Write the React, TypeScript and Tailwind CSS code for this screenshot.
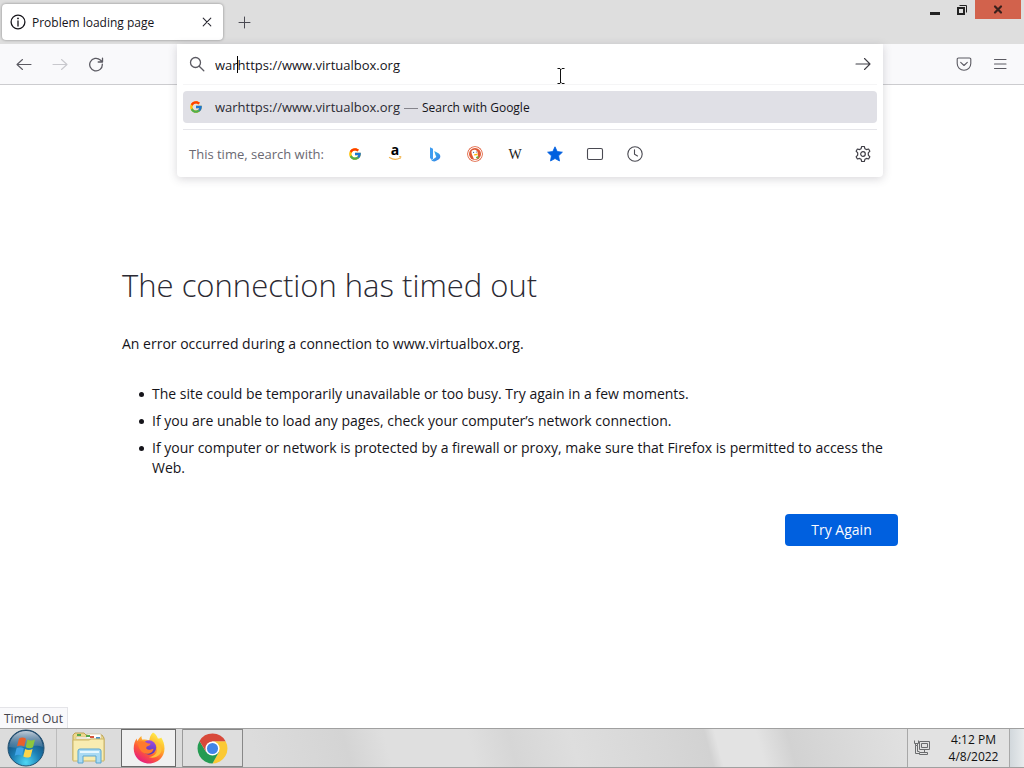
import { useState } from 'react';
import type { ReactNode } from 'react';
import { FcGoogle } from 'react-icons/fc';

interface IconButtonProps {
  label: string;
  className?: string;
  children: ReactNode;
}

const IconButton = ({ label, className = '', children }: IconButtonProps) => (
  <button type="button" aria-label={label} className={`flex shrink-0 items-center justify-center ${className}`}>
    {children}
  </button>
);

const Line = ({ d, className = 'size-4', width = 1.1 }: { d: string; className?: string; width?: number }) => (
  <svg
    viewBox="0 0 16 16"
    className={className}
    fill="none"
    stroke="currentColor"
    strokeWidth={width}
    strokeLinecap="round"
    strokeLinejoin="round"
  >
    <path d={d} />
  </svg>
);

const InfoIcon = () => (
  <svg viewBox="0 0 16 16" className="size-4 shrink-0" fill="none" stroke="#15141a" strokeWidth="1.3">
    <circle cx="8" cy="8" r="6.9" />
    <path d="M8 7v5" strokeLinecap="round" />
    <circle cx="8" cy="4.4" r="0.9" fill="#15141a" stroke="none" />
  </svg>
);

const AmazonIcon = () => (
  <svg viewBox="0 0 16 16" className="size-4 overflow-visible">
    <text x="8" y="9" textAnchor="middle" fontSize="14" fontWeight="700" fontFamily="Open Sans, sans-serif" fill="#000">
      a
    </text>
    <path d="M2.500 11.500c3.400 2.200 7.400 2.300 10.600.5" fill="none" stroke="#f2b44e" strokeWidth="1.300" strokeLinecap="round" />
    <path d="M12 10.600l2-.1-.6 2" fill="none" stroke="#f2b44e" strokeWidth="0.900" />
  </svg>
);

const BingIcon = () => (
  <svg viewBox="0 0 16 16" className="size-4">
    <defs>
      <linearGradient id="bing" x1="0" y1="0" x2="1" y2="1">
        <stop offset="0" stopColor="#35c1ea" />
        <stop offset="1" stopColor="#3b78e7" />
      </linearGradient>
    </defs>
    <path d="M3 1.200l3 1.500v9.800l-1.200 1.200L3 12z" fill="#3f9cf0" />
    <path d="M7.200 5l3.800 1.900c1.700.9 2.500 2.200 2.300 3.800-.2 1.500-1 2.400-2.200 3.100l-2.300 1.300c-1.700.8-3.900.2-5-1.500l1.500.1L9.300 11l-.9-2.200z" fill="url(#bing)" />
  </svg>
);

const DuckIcon = () => (
  <svg viewBox="0 0 16 16" className="size-4">
    <circle cx="8" cy="8" r="7.800" fill="#de5833" />
    <circle cx="8" cy="8" r="7" fill="#fff" />
    <circle cx="8" cy="8" r="6" fill="#de5833" />
    <path d="M5 4.600c1.600-1.400 4.400-1 5.300.9.500 1 .4 1.800.6 2.500l-.2 3.500c-1 1.800-2.500 2-3.700 1.700L5.200 9C4.600 7.300 4 5.600 5 4.600z" fill="#fff" />
    <circle cx="6.600" cy="6.300" r="0.600" fill="#2d4f8e" />
    <circle cx="9.400" cy="6" r="0.500" fill="#2d4f8e" />
    <path d="M7.200 8.200c1.200-.6 2.600-.7 4-.4l-1.400 1.400-2.800.3z" fill="#fdb90a" />
    <path d="M9 11l2.500-1v2.500L9 12z" fill="#65bc46" />
  </svg>
);

const WikipediaIcon = () => (
  <svg viewBox="0 0 16 16" className="size-4 overflow-visible">
    <text x="8" y="12.500" textAnchor="middle" fontSize="14" fontFamily="Liberation Serif, serif" fill="#222">
      W
    </text>
  </svg>
);

const StarIcon = () => (
  <svg viewBox="0 0 16 16" className="size-4">
    <path
      d="M8 .8l2.200 4.700 5.200.7-3.800 3.600.9 5.200L8 12.500 3.500 15l.9-5.200L.6 6.200l5.200-.7z"
      fill="#0060df"
      stroke="#0060df"
      strokeWidth="0.800"
      strokeLinejoin="round"
    />
  </svg>
);

const TabsIcon = () => (
  <svg viewBox="0 0 16 16" className="size-4 overflow-visible" fill="none" stroke="#4a4a52" strokeWidth="1.100">
    <rect x="0.500" y="2.500" width="15" height="11" rx="1.500" />
  </svg>
);

const ClockIcon = () => (
  <svg viewBox="0 0 16 16" className="size-4" fill="none" stroke="#4a4a52" strokeWidth="1.100" strokeLinecap="round">
    <circle cx="8" cy="8" r="7.200" />
    <path d="M7.500 3.800v4.400l3 1.800" />
  </svg>
);

const GearIcon = () => (
  <svg viewBox="0 0 16 16" className="size-4 overflow-visible" fill="none" stroke="#3f3e46" strokeWidth="1.200" strokeLinejoin="round">
    <path d="M6.700.5h2.600l.6 2.200 1.500.9 2.200-.6 1.300 2.200-1.600 1.700v2.200l1.600 1.700-1.300 2.200-2.200-.6-1.500.9-.6 2.200H6.700l-.6-2.200-1.500-.9-2.200.6-1.300-2.200 1.600-1.700V6.900L1.100 5.200 2.400 3l2.200.6 1.500-.9z" />
    <circle cx="8" cy="8" r="2.300" />
  </svg>
);

const WindowsOrb = () => (
  <svg viewBox="0 0 38 38" className="size-[38px]">
    <defs>
      <radialGradient id="orb" cx="0.500" cy="0.900" r="0.850">
        <stop offset="0" stopColor="#4fd8f5" />
        <stop offset="0.450" stopColor="#1c7fb5" />
        <stop offset="1" stopColor="#123a62" />
      </radialGradient>
      <linearGradient id="gloss" x1="0" y1="0" x2="0" y2="1">
        <stop offset="0" stopColor="#d4dfe8" stopOpacity="0.900" />
        <stop offset="1" stopColor="#7f9db5" stopOpacity="0.300" />
      </linearGradient>
    </defs>
    <circle cx="19" cy="19" r="18" fill="url(#orb)" stroke="#24506f" />
    <path d="M2 18C3 8 10 2 19 2s16 6 17 16c-10-4-22 3-34 0z" fill="url(#gloss)" />
    <path d="M12 9.500c2.500-1.400 5-1 7 .2l-1.800 7.800c-2.300-1.200-4.500-1.300-7.200-.2z" fill="#e9602b" />
    <path d="M20.400 10.500c2.400 1.300 4.800 1.400 7.600 0l-2 7.800c-2.500 1.300-5 1.200-7.300 0z" fill="#8cc63e" />
    <path d="M9.600 19c2.600-1.200 5-1 7.200.2l-1.900 7.600c-2.300-1.300-4.600-1.300-7.200-.1z" fill="#3fa3e6" />
    <path d="M18.200 20c2.300 1.300 4.800 1.300 7.400 0l-2 7.700c-2.500 1.200-5 1.200-7.300-.1z" fill="#fdd549" />
  </svg>
);

const ExplorerIcon = () => (
  <svg viewBox="0 0 36 34" className="h-[34px] w-9">
    <path d="M2 4l2-2h9l2 2h16l2 3v22H2z" fill="#ecd98c" stroke="#bda253" />
    <path d="M5 6h11v-3h14v5H5z" fill="#fff" stroke="#cbbf93" strokeWidth="0.700" />
    <path d="M6 4h4M15 5h4" stroke="#55a84b" strokeWidth="2" />
    <path d="M19 6h4" stroke="#d7553c" strokeWidth="2" />
    <path d="M25 7h4" stroke="#4b8fc4" strokeWidth="2" />
    <path d="M2 9h16l2-1h13v22H2z" fill="#f8ecb1" stroke="#cdb667" />
    <path d="M7 32V20q0-2 2-2h19q2 0 2 2v12h-5v-7H12v7z" fill="#a9daf4" stroke="#5aa6cf" />
    <path d="M9 21h19" stroke="#e6f7ff" strokeWidth="2" />
  </svg>
);

const FirefoxIcon = () => (
  <svg viewBox="0 0 32 32" className="size-8">
    <defs>
      <linearGradient id="fox" x1="0.850" y1="0.050" x2="0.250" y2="1">
        <stop offset="0" stopColor="#fff44f" />
        <stop offset="0.350" stopColor="#ffb52b" />
        <stop offset="0.650" stopColor="#ff5a36" />
        <stop offset="1" stopColor="#e31587" />
      </linearGradient>
      <linearGradient id="globe" x1="0.600" y1="0" x2="0.400" y2="1">
        <stop offset="0" stopColor="#a04be0" />
        <stop offset="1" stopColor="#4a37b5" />
      </linearGradient>
    </defs>
    <path
      d="M20 .5c3 1.700 4.300 4 4.800 6 1.200.2 2.800-.3 3.400-1 2 3 3.300 6.800 3.300 11C31.500 25 24.700 31.500 16 31.500S.7 25 .7 16.500c0-4.200 1.200-7.500 3-10 .1 1.200.4 2 .9 2.600C5.400 7 6.800 5.300 8.500 4c-.1 1.600.3 2.900 1 3.800 2.200-.6 4.700-.2 6.800 1C16.500 5.600 17.500 2.500 20 .5z"
      fill="url(#fox)"
    />
    <circle cx="16" cy="15.500" r="7.200" fill="url(#globe)" />
    <path d="M5 10c2.600-1.200 6-1 8.300.4 1.200.9 2.800 1.100 4.300 1-.2 1.800-2.200 2.300-3.600 3-1 .6-.8 1.800-.2 2.700 1.700 1.500 4.300.3 6.700-.3-.4 3.400-3.800 5.500-7.400 5C8.500 21 5 16.500 5 10z" fill="#ff7a2d" />
    <path d="M20 8.500c3.800 3.200 5.300 7.700 3.300 12.300-1.500 2.500-4.400 4.200-7.500 4.200 5 1.800 10.600-.3 12.400-5.200C30 14.800 26.500 9.300 20 8.500z" fill="#ffc13a" />
  </svg>
);

const ChromeIcon = () => (
  <svg viewBox="0 0 32 32" className="size-[31px]">
    <path d="M16 1v7.500h13.500A15.500 15.500 0 0 1 16 31.500l6.500-11.700z" fill="#fbc934" />
    <path d="M2.600 8.300A15.500 15.500 0 0 0 16 31.500l6.500-11.700-13 0z" fill="#259b52" />
    <path d="M2.600 8.300A15.500 15.500 0 0 1 29.500 8.500H16l-6.500 11z" fill="#d8493a" />
    <circle cx="16" cy="16" r="7.300" fill="#fff" />
    <circle cx="16" cy="16" r="5.700" fill="#4285e8" />
  </svg>
);

const NetworkIcon = () => (
  <svg viewBox="0 0 18 16" className="h-4 w-[18px] shrink-0" fill="none" stroke="#6b6c6e">
    <path d="M5.500 1.500h10v8h-10zM7.500 3.500h6v4h-6z" />
    <path d="M10.500 9.500v3M5.500 12.500h8v2h-8z" />
    <path d="M.5.500v3h4v-3M1.500 3.500v2h2v-2M1.500 5.500v8h4M3.500 5.500v6h2" />
  </svg>
);

const engines = [
  { name: 'Google', icon: <FcGoogle className="size-[14px]" /> },
  { name: 'Amazon', icon: <AmazonIcon /> },
  { name: 'Bing', icon: <BingIcon /> },
  { name: 'DuckDuckGo', icon: <DuckIcon /> },
  { name: 'Wikipedia', icon: <WikipediaIcon /> },
  { name: 'Bookmarks', icon: <StarIcon /> },
  { name: 'Tabs', icon: <TabsIcon /> },
  { name: 'History', icon: <ClockIcon /> },
];

const reasons = [
  'The site could be temporarily unavailable or too busy. Try again in a few moments.',
  'If you are unable to load any pages, check your computer’s network connection.',
  'If your computer or network is protected by a firewall or proxy, make sure that Firefox is permitted to access the Web.',
];

const TabStrip = () => (
  <header className="flex h-11 shrink-0 items-start bg-[#dedede]">
    <div className="ml-0.5 mt-1 flex h-9 w-[221px] items-center rounded bg-white px-2 shadow-[0_0_3px_rgba(0,0,0,0.4)]">
      <InfoIcon />
      <span className="ml-1.5 flex-1 whitespace-nowrap pt-0.5 text-xs text-[#15141a]">Problem loading page</span>
      <IconButton label="Close tab" className="size-4 text-[#2b2a33]">
        <Line d="M4.200 4.200l7.600 7.600M11.800 4.200l-7.600 7.600" />
      </IconButton>
    </div>
    <IconButton label="New tab" className="ml-[13px] mt-[14px] size-4 text-[#4a4a52]">
      <Line d="M8.500 3v11M3 8.500h11" width={1} />
    </IconButton>
    <div className="ml-auto flex">
      <IconButton label="Minimize" className="h-[19px] w-[27px]">
        <svg viewBox="0 0 12 12" className="mt-1 size-3">
          <path d="M1 6h10v3H1z" fill="#222" />
        </svg>
      </IconButton>
      <IconButton label="Restore" className="h-[19px] w-[27px]">
        <svg viewBox="0 0 12 12" className="size-3" fill="none" stroke="#222">
          <path d="M2 4h6v6H2z" strokeWidth="2" />
          <path d="M3.500 1.500h7v7" strokeWidth="1" />
        </svg>
      </IconButton>
      <IconButton label="Close" className="mr-[3px] h-[19px] w-[46px] bg-[#d2624c] text-[#3a201c]">
        <Line d="M5 4.500l6 6M11 4.500l-6 6" width={2.2} />
      </IconButton>
    </div>
  </header>
);

const UrlBar = () => {
  const [value, setValue] = useState('warhttps://www.virtualbox.org');

  return (
    <div className="absolute inset-x-0 top-0 rounded-b bg-white px-1.5 shadow-[0_2px_10px_rgba(58,57,68,0.2)]">
      <div className="relative flex h-[41px] items-center border-b border-[#f5f5f6] px-1.5 text-[#5b5a62]">
        <Line d="M6.500 1.500a5 5 0 1 1 0 10 5 5 0 0 1 0-10M10.200 10.200l4.600 4.600" width={1.3} />
        <input
          aria-label="Search with Google or enter address"
          value={value}
          onChange={(e) => setValue(e.target.value)}
          className="ml-[10px] h-8 min-w-0 flex-1 bg-transparent pt-0.5 text-[13px] text-[#15141a] outline-none"
        />
        <span className="absolute left-[54px] top-3 h-[17px] w-px bg-black" />
        <IconButton label="Go" className="text-[#3f3e46]">
          <Line d="M1 8h14M9.500 2.500L15 8l-5.500 5.500" />
        </IconButton>
      </div>

      <button type="button" className="mt-1.5 flex h-8 w-full items-center rounded bg-[#e0e0e6] pl-1.5 text-[13px] text-[#2b2a33]">
        <FcGoogle className="size-[14px]" />
        <span className="ml-3 pt-0.5">{value}</span>
        <span className="mx-1 mt-0.5 h-px w-[14px] bg-[#85848c]" />
        <span className="pt-0.5 text-xs text-[#15141a]">Search with Google</span>
      </button>

      <div className="mt-1.5 flex h-12 items-center border-t border-[#e6e6ea] px-1.5">
        <span className="w-[146px] whitespace-nowrap pt-0.5 text-[13px] text-[#6a6972]">This time, search with:</span>
        {engines.map((engine) => (
          <IconButton key={engine.name} label={engine.name} className="h-8 w-10">
            {engine.icon}
          </IconButton>
        ))}
        <IconButton label="Search settings" className="ml-auto size-4">
          <GearIcon />
        </IconButton>
      </div>
    </div>
  );
};

const NavBar = () => (
  <nav className="flex h-[41px] shrink-0 border-b border-[#cccccf] bg-[#f9f9fb] text-[#5b5a62]">
    <div className="flex w-[177px] shrink-0 items-center gap-5 pl-4">
      <IconButton label="Back">
        <Line d="M1 8.500h14M6.500 3.500L1 8.500l5.500 5" />
      </IconButton>
      <IconButton label="Forward" className="text-[#c8c8cd]">
        <Line d="M1 8.500h14M9.500 3.500l5.500 5-5.500 5" />
      </IconButton>
      <IconButton label="Reload">
        <Line d="M14.300 8.200a6.300 6.300 0 1 1-2-4.200l2 1.800M14.500 2.200V6h-4.300" width={1.3} />
      </IconButton>
    </div>
    <div className="relative z-10 min-w-0 flex-1">
      <UrlBar />
      <svg viewBox="0 0 8 16" className="pointer-events-none absolute left-[380px] top-6 h-4 w-2" fill="none" stroke="#111">
        <path d="M.5.500h2.500l1 1 1-1h2.500M3.500 1v14M.5 15.500h2.500l1-1 1 1h2.500" />
      </svg>
    </div>
    <div className="flex w-[141px] shrink-0 items-center justify-end gap-5 pr-4">
      <IconButton label="Save to Pocket">
        <Line d="M2.500 2h11a1.300 1.300 0 0 1 1.300 1.300V7.500a6.800 6.800 0 0 1-13.600 0V3.300A1.300 1.300 0 0 1 2.500 2M4.700 6.300L8 9.500l3.300-3.200" />
      </IconButton>
      <IconButton label="Open menu">
        <Line d="M2.500 3.500h11.500M2.500 8h11.500M2.500 12.500h11.500" />
      </IconButton>
    </div>
  </nav>
);

const ErrorPage = () => (
  <main className="relative flex-1 bg-white pl-[122px] pr-[126px] pt-[175px] text-[#15141a]">
    <h1 className="text-[31px] font-light leading-[50px] text-[#2b2a33]">The connection has timed out</h1>
    <p className="mt-6 text-sm leading-5">An error occurred during a connection to www.virtualbox.org.</p>
    <ul className="mt-[30px] space-y-[7px] pl-[17px] text-sm leading-5">
      {reasons.map((reason) => (
        <li key={reason} className="flex before:mr-2 before:mt-2 before:size-[5px] before:shrink-0 before:rounded-full before:bg-[#15141a]">
          {reason}
        </li>
      ))}
    </ul>
    <div className="mt-9 flex justify-end">
      <button type="button" className="h-8 w-[113px] rounded bg-[#0060df] text-sm font-medium text-[#fbfbfe]">
        Try Again
      </button>
    </div>
    <div className="absolute bottom-0 left-0 flex h-[21px] items-center border-r border-t border-[#e4e4e8] bg-[#f9f9fb] pl-1 pr-1 pt-0.5 text-xs text-[#45444c]">
      Timed Out
    </div>
  </main>
);

const Taskbar = () => (
  <footer className="flex h-10 shrink-0 border-y border-[#a0a0a0] bg-[linear-gradient(75deg,#dcdcdc_0%,#dcdcdc_25%,#d4d4d4_34%,#dfdfdf_38%,#dfdfdf_46%,#d6d6d6_50%,#dedede_56%,#d6d6d6_65%,#d2d2d2_69%,#e3e3e3_70%,#e3e3e3_74%,#d2d2d2_77%,#e0e0e0_88%)]">
    <IconButton label="Start" className="w-[57px] border-r border-[#bcbcbc] pr-1">
      <WindowsOrb />
    </IconButton>
    <IconButton label="Windows Explorer" className="w-16">
      <ExplorerIcon />
    </IconButton>
    <IconButton label="Firefox" className="w-[55px] border border-[#6a6a6a] bg-[#f0f0f0]">
      <FirefoxIcon />
    </IconButton>
    <span className="w-[7px] border-r border-[#9b9b9b]" />
    <IconButton label="Chrome" className="w-[60px] border border-l-0 border-[#888] bg-[#dedede]">
      <ChromeIcon />
    </IconButton>
    <div className="ml-auto flex items-center border-l border-[#a8a8a8] bg-[#e2e2e2] pl-1.5">
      <NetworkIcon />
      <time className="w-[77px] pl-1.5 text-center text-xs leading-[17px] text-[#111]">
        <span className="block">4:12 PM</span>
        <span className="block">4/8/2022</span>
      </time>
    </div>
    <button type="button" aria-label="Show desktop" className="w-[15px] border-l border-[#a8a8a8] bg-linear-to-r from-[#d2d8dc] to-[#e8ebed]" />
  </footer>
);

export default function App() {
  return (
    <div className="flex min-h-screen flex-col bg-white font-['Open_Sans','Noto_Sans',sans-serif]">
      <TabStrip />
      <NavBar />
      <ErrorPage />
      <Taskbar />
    </div>
  );
}
